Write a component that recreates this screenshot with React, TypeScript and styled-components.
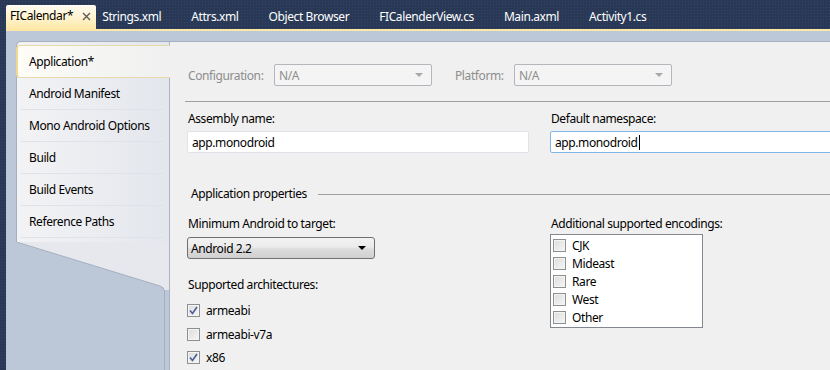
import styled, { createGlobalStyle } from "styled-components";

const GlobalStyle = createGlobalStyle`
  html, body {
    margin: 0;
    padding: 0;
    width: 830px;
    height: 370px;
    overflow: hidden;
    background: #293955;
  }
  body {
    font-family: "Noto Sans", "Open Sans", sans-serif;
    font-size: 12px;
    letter-spacing: -0.4px;
  }
`;

const Window = styled.div`
  display: flex;
  flex-direction: column;
  width: 830px;
  height: 370px;
  background-color: #293955;
  background-image: radial-gradient(#33456a 0.7px, transparent 0.9px);
  background-size: 3px 3px;
  overflow: hidden;
`;

const TabStrip = styled.div`
  display: flex;
  align-items: flex-end;
  height: 29px;
  padding-left: 6px;
  gap: 18px;
`;

const DocTab = styled.div<{ $active?: boolean }>`
  display: flex;
  align-items: center;
  height: ${(p) => (p.$active ? "22px" : "21px")};
  padding: ${(p) => (p.$active ? "0 4px 2px 4px" : "0 6px 2px 6px")};
  margin-right: ${(p) => (p.$active ? "-18px" : "0")};
  color: ${(p) => (p.$active ? "#000" : "#fff")};
  background: ${(p) => (p.$active ? "linear-gradient(#fffcf4, #fff3cd 55%, #ffe8a6)" : "transparent")};
  border-radius: 2px 2px 0 0;
  white-space: nowrap;
  line-height: 16px;
`;

const CloseBox = styled.span`
  display: inline-flex;
  margin-left: 7px;
  width: 12px;
  height: 12px;
  align-items: center;
  justify-content: center;
`;

const GoldBar = styled.div`
  height: 2px;
  margin-left: 6px;
  background: #ffe8a6;
`;

const Frame = styled.div`
  flex: 1;
  display: flex;
  margin-left: 6px;
  padding: 10px 0 0 10px;
  background: #bcc7d8;
  min-height: 0;
`;

const NavColumn = styled.div`
  width: 153px;
  display: flex;
  flex-direction: column;
  flex-shrink: 0;
`;

const NavList = styled.div`
  display: flex;
  flex-direction: column;
  border-top: 1px solid #a4afc0;
  border-left: 1px solid #a4afc0;
  border-top-left-radius: 5px;
  padding: 3px 0 4px 0;
  background: linear-gradient(90deg, #f3f3f5, #e3e6ec);
`;

const NavItem = styled.div<{ $selected?: boolean }>`
  position: relative;
  box-sizing: border-box;
  height: 32px;
  display: flex;
  align-items: center;
  color: #000;
  white-space: nowrap;
  border-bottom: 1px solid #dfe2e8;
  ${(p) =>
    p.$selected
      ? `
    margin-left: -1px;
    margin-right: -1px;
    z-index: 1;
    padding-left: 11px;
    background: linear-gradient(90deg, #fffdf6, #f6f6f4 40%, #f0f0f0);
    border: 1px solid #e8d9a8;
    border-right: none;
    border-left: 2px solid #f1d891;
    border-radius: 4px 0 0 4px;
    height: 33px;
  `
      : `
    margin-left: 4px;
    margin-right: 4px;
    padding-left: 8px;
  `}
`;

const Tail = styled.svg`
  flex: 1;
  width: 153px;
  display: block;
`;

const Content = styled.div`
  flex: 1;
  min-width: 0;
  background: #f0f0f0;
  border-top: 1px solid #a4afc0;
  border-left: 1px solid #a9b3c3;
  padding: 22px 0 0 17px;
  overflow: hidden;
`;

const ConfigRow = styled.div`
  display: flex;
  align-items: center;
  height: 22px;
`;

const DimLabel = styled.span<{ $width: number; $gap?: number }>`
  color: #8d8d8d;
  width: ${(p) => p.$width}px;
  margin-left: ${(p) => p.$gap ?? 1}px;
  white-space: nowrap;
`;

const DisabledSelect = styled.div`
  width: 158px;
  height: 22px;
  box-sizing: border-box;
  border: 1px solid #b3b6ba;
  border-radius: 2px;
  background: #f4f4f4;
  color: #8d8d8d;
  display: flex;
  align-items: center;
  justify-content: space-between;
  padding: 0 8px 0 4px;
`;

const Rule = styled.div`
  height: 1px;
  background: #a0a0a0;
  margin: 15px 0 0 -2px;
`;

const FieldGrid = styled.div<{ $top: number }>`
  display: grid;
  grid-template-columns: 342px 320px;
  column-gap: 21px;
  margin-top: ${(p) => p.$top}px;
`;

const Field = styled.div`
  display: flex;
  flex-direction: column;
`;

const Label = styled.div`
  color: #000;
  line-height: 16px;
  padding-left: 1px;
  white-space: nowrap;
`;

const TextBox = styled.div<{ $focused?: boolean }>`
  margin-top: 4px;
  height: 22px;
  box-sizing: border-box;
  background: #fff;
  border: 1px solid ${(p) => (p.$focused ? "#82b6ea" : "#e2e3ea")};
  border-radius: 2px;
  display: flex;
  align-items: center;
  padding-left: 4px;
  color: #000;
`;

const Caret = styled.span`
  display: inline-block;
  width: 1px;
  height: 15px;
  background: #000;
  margin-left: 1px;
`;

const GroupHeader = styled.div`
  display: flex;
  align-items: center;
  margin-top: 33px;
  padding-left: 4px;
  line-height: 16px;
  &::after {
    content: "";
    flex: 1;
    height: 1px;
    background: #a0a0a0;
    margin-left: 11px;
  }
`;

const Combo = styled.div`
  margin-top: 5px;
  width: 188px;
  height: 22px;
  box-sizing: border-box;
  border: 1px solid #707070;
  border-radius: 3px;
  background: linear-gradient(#f2f2f2, #ebebeb 45%, #dddddd 55%, #cfcfcf);
  display: flex;
  align-items: center;
  justify-content: space-between;
  padding: 0 8px 0 3px;
  color: #000;
`;

const SubLabel = styled(Label)`
  margin-top: 18px;
`;

const CheckRow = styled.div`
  height: 23.5px;
  display: flex;
  align-items: center;
  gap: 6px;
  &:first-of-type {
    margin-top: 6px;
  }
`;

const Box = styled.span`
  width: 13px;
  height: 13px;
  box-sizing: border-box;
  border: 1px solid #8e8f8f;
  background: linear-gradient(135deg, #dcdcdc, #f6f6f6);
  box-shadow: inset 0 0 0 1px #f4f4f4;
  display: inline-flex;
  align-items: center;
  justify-content: center;
  flex-shrink: 0;
`;

const ListBox = styled.div`
  margin-top: 2px;
  width: 153px;
  height: 94px;
  box-sizing: border-box;
  border: 1px solid #828790;
  background: #fff;
  padding: 4px 0 0 2px;
`;

const ListItem = styled.div`
  height: 18px;
  display: flex;
  align-items: flex-start;
  gap: 6px;
  line-height: 14px;
`;

const Arrow = ({ color }: { color: string }) => (
  <svg width="8" height="4" viewBox="0 0 8 4">
    <path d="M0 0 H8 L4 4 Z" fill={color} />
  </svg>
);

const Check = ({ checked }: { checked?: boolean }) => (
  <Box>
    {checked && (
      <svg width="9" height="9" viewBox="0 0 9 9">
        <path d="M1 4.5 L3.5 7.5 L8 1" fill="none" stroke="#4a5f97" strokeWidth="1.6" />
      </svg>
    )}
  </Box>
);

const tabs = ["Strings.xml", "Attrs.xml", "Object Browser", "FICalenderView.cs", "Main.axml", "Activity1.cs"];
const pages = ["Android Manifest", "Mono Android Options", "Build", "Build Events", "Reference Paths"];
const archs = [
  { name: "armeabi", on: true },
  { name: "armeabi-v7a", on: false },
  { name: "x86", on: true },
];
const encodings = ["CJK", "Mideast", "Rare", "West", "Other"];

const App = () => {
  return (
    <Window>
      <GlobalStyle />
      <TabStrip>
        <DocTab $active>
          FICalendar*
          <CloseBox>
            <svg width="9" height="9" viewBox="0 0 9 9">
              <path d="M1 1 L8 8 M8 1 L1 8" stroke="#5a5a5a" strokeWidth="1.4" />
            </svg>
          </CloseBox>
        </DocTab>
        {tabs.map((t) => (
          <DocTab key={t}>{t}</DocTab>
        ))}
      </TabStrip>
      <GoldBar />
      <Frame>
        <NavColumn>
          <NavList>
            <NavItem $selected>Application*</NavItem>
            {pages.map((p) => (
              <NavItem key={p}>{p}</NavItem>
            ))}
          </NavList>
          <Tail viewBox="0 0 153 140" preserveAspectRatio="xMinYMin slice">
            <path d="M0 0 H153 V48 H148 Q148 45 144 44 Z" fill="#e6e8ed" />
            <path d="M0.5 0 L144 44 Q148 45 148.5 49 V140" fill="none" stroke="#a4afc0" />
          </Tail>
        </NavColumn>
        <Content>
          <ConfigRow>
            <DimLabel $width={86}>Configuration:</DimLabel>
            <DisabledSelect>
              N/A
              <Arrow color="#a8a8a8" />
            </DisabledSelect>
            <DimLabel $width={59} $gap={23}>Platform:</DimLabel>
            <DisabledSelect>
              N/A
              <Arrow color="#a8a8a8" />
            </DisabledSelect>
          </ConfigRow>
          <Rule />
          <FieldGrid $top={9}>
            <Field>
              <Label>Assembly name:</Label>
              <TextBox>app.monodroid</TextBox>
            </Field>
            <Field>
              <Label>Default namespace:</Label>
              <TextBox $focused>
                app.monodroid
                <Caret />
              </TextBox>
            </Field>
          </FieldGrid>
          <GroupHeader>Application properties</GroupHeader>
          <FieldGrid $top={14}>
            <Field>
              <Label>Minimum Android to target:</Label>
              <Combo>
                Android 2.2
                <Arrow color="#000" />
              </Combo>
              <SubLabel>Supported architectures:</SubLabel>
              <div>
                {archs.map((a) => (
                  <CheckRow key={a.name}>
                    <Check checked={a.on} />
                    {a.name}
                  </CheckRow>
                ))}
              </div>
            </Field>
            <Field>
              <Label>Additional supported encodings:</Label>
              <ListBox>
                {encodings.map((e) => (
                  <ListItem key={e}>
                    <Check />
                    {e}
                  </ListItem>
                ))}
              </ListBox>
            </Field>
          </FieldGrid>
        </Content>
      </Frame>
    </Window>
  );
};

export default App;
